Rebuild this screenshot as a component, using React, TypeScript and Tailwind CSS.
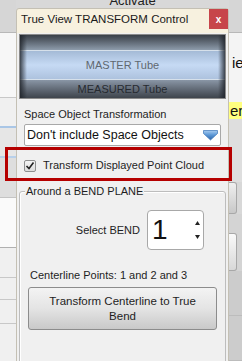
import React from 'react';

const font = { fontFamily: '"Liberation Sans", Arial, sans-serif' };

const DropArrow = () => (
  <svg width="15" height="12" viewBox="0 0 15 12">
    <defs>
      <linearGradient id="da" x1="0" y1="0" x2="0" y2="1">
        <stop offset="0" stopColor="#a8ccf0" />
        <stop offset="0.45" stopColor="#5f9ad8" />
        <stop offset="1" stopColor="#2a64a8" />
      </linearGradient>
    </defs>
    <path d="M0.5 1.5 L14.5 1.5 L14.5 4.5 L7.5 11 L0.5 4.5 Z" fill="url(#da)" stroke="#3a74b8" strokeWidth="0.7" />
  </svg>
);

const App = () => {
  return (
    <div className="relative w-[242px] h-[361px] overflow-hidden bg-[#ececec]" style={font}>
      {/* background app behind the dialog */}
      <div className="flex h-full">
        <div className="w-[16px] flex flex-col">
          <div className="h-[33px] bg-[#d6d6d6] border-b border-[#b8b8b8]" />
          <div className="h-[65px] bg-[#f7f7f7] border-b border-[#c8c8c8]" />
          <div className="h-[30px] bg-[#f0f0f0] border-b-2 border-[#a9c6e6]" />
          <div className="h-[30px] bg-[#e6e6e6] border-b-2 border-[#b8d0ea]" />
          <div className="h-[40px] bg-[#dedede] border-b border-[#c4c4c4]" />
          <div className="h-[50px] bg-[#fafafa] border-b border-[#b0b0b0]" />
          <div className="h-[30px] bg-[#f0f0f0] border-b border-[#c8c8c8]" />
          <div className="h-[22px] bg-[#f0f0f0] border-b border-[#c8c8c8]" />
          <div className="h-[24px] bg-[#f0f0f0] border-b border-[#c8c8c8]" />
          <div className="flex-1 bg-[#f0f0f0]" />
        </div>
        <div className="flex-1 bg-[#d8d8d8] flex justify-center">
          <span className="text-[13px] leading-none text-[#222] mt-[-6px] ml-[20px]">Activate</span>
        </div>
        <div className="w-[13px] flex flex-col">
          <div className="h-[33px] bg-[#d6d6d6] border-b border-[#b8b8b8]" />
          <div className="h-[70px] bg-[#f4f4f4] pt-[22px] text-[15px] leading-none text-[#111] pl-[3px] overflow-hidden whitespace-nowrap">ie</div>
          <div className="h-[17px] bg-[#ffff80] text-[15px] leading-[17px] text-[#111] pl-[1px] overflow-hidden whitespace-nowrap">er</div>
          <div className="h-[64px] bg-[#dedede]" />
          <div className="h-[32px] bg-[#d8d8d8] flex">
            <div className="w-[8px] rounded-r-[3px] border border-l-0 border-[#a8a8a8] bg-gradient-to-b from-[#f0f0f0] to-[#c8c8c8]" />
          </div>
          <div className="h-[20px] bg-[#d4d4d4]" />
          <div className="h-[38px] bg-[#d4d4d4] flex">
            <div className="w-[8px] rounded-r-[3px] border border-l-0 border-[#a8a8a8] bg-gradient-to-b from-[#fafafa] to-[#d8d8d8]" />
          </div>
          <div className="flex-1 bg-[#cccccc] flex flex-col">
            <div className="h-[45px] border-b border-[#bcbcbc]" />
            <div className="h-[45px] border-b border-[#bcbcbc]" />
          </div>
        </div>
      </div>

      {/* dialog window */}
      <div className="absolute left-[16px] top-[8px] w-[213px] h-[360px] bg-[#f7f1df] border border-[#c4c0b4] rounded-t-[3px] flex flex-col">
        <div className="h-[21px] flex items-center justify-between pl-[4px]">
          <span className="text-[11.5px] text-[#1a1a1a] whitespace-nowrap">True View TRANSFORM Control</span>
          <div className="w-[19px] h-[20px] bg-[#c7454a] flex items-center justify-center text-white text-[10px] font-bold mt-[-1px]">x</div>
        </div>
        <div className="flex-1 bg-[#f0f0f0] mt-[3px] px-[2px] pt-[1px] flex flex-col">
          {/* tube picture */}
          <div className="relative h-[65px] border border-[#8a8a8a] bg-gradient-to-b from-[#3e444c] via-[#b4c6dc] to-[#3c424a] overflow-hidden">
            <div className="h-[15px] bg-gradient-to-b from-[#3a4048] to-[#8e9cac]" />
            <div className="h-[30px] border-y border-[#d6e0ea] bg-gradient-to-b from-[#a4bad6] via-[#c6daf4] to-[#adc2de] flex items-center justify-center">
              <span className="text-[11px] text-[#606870]">MASTER Tube</span>
            </div>
            <div className="h-[18px] bg-gradient-to-b from-[#8a96a6] to-[#3e444c] flex items-center justify-center">
              <span className="text-[11px] text-[#262a30]">MEASURED Tube</span>
            </div>
            <div className="absolute left-0 top-0 bottom-0 w-[7px] bg-gradient-to-r from-[#1c2026] to-transparent opacity-80" />
            <div className="absolute right-0 top-0 bottom-0 w-[7px] bg-gradient-to-l from-[#1c2026] to-transparent opacity-80" />
          </div>

          <div className="px-[5px] pt-[8px] text-[11px] text-[#1e1e1e] leading-[14px]">Space Object Transformation</div>
          <div className="mx-[5px] mt-[3px] h-[22px] bg-white border border-[#a8a8a8] rounded-[2px] flex items-center justify-between pl-[2px] pr-[2px]">
            <span className="text-[12.5px] text-[#111] whitespace-nowrap">Don't include Space Objects</span>
            <DropArrow />
          </div>

          <div className="h-[33px] flex items-center gap-[7px] pl-[5px] pt-[6px]">
            <div className="w-[12px] h-[12px] border border-[#8e8f8f] rounded-[2px] bg-gradient-to-b from-[#f4f4f4] to-[#dcdcdc] flex items-center justify-center">
              <svg width="10" height="10" viewBox="0 0 10 10">
                <path d="M1.5 5 L4 7.5 L8.5 1.5" fill="none" stroke="#222" strokeWidth="1.6" />
              </svg>
            </div>
            <span className="text-[11px] text-[#1e1e1e] whitespace-nowrap">Transform Displayed Point Cloud</span>
          </div>

          {/* group box */}
          <div className="relative mt-[12px] flex-1 border border-[#bdbdbd] rounded-[3px] shadow-[inset_1px_1px_0_#fff] flex flex-col">
            <span className="absolute left-[5px] top-[-8px] bg-[#f0f0f0] px-[1px] text-[11px] text-[#1e1e1e] leading-[14px]">Around a BEND PLANE</span>
            <div className="flex items-center justify-end pr-[21px] pt-[18px] gap-[7px]">
              <span className="text-[11px] text-[#1e1e1e]">Select BEND</span>
              <div className="w-[57px] h-[40px] bg-white border border-[#a8a8a8] rounded-[4px] flex items-center justify-between pl-[4px] pr-[3px]">
                <span className="text-[28px] leading-none text-[#111]">1</span>
                <div className="flex flex-col gap-[10px]">
                  <svg width="5" height="4" viewBox="0 0 5 4"><path d="M0 4 L2.5 0 L5 4 Z" fill="#222" /></svg>
                  <svg width="5" height="4" viewBox="0 0 5 4"><path d="M0 0 L2.5 4 L5 0 Z" fill="#222" /></svg>
                </div>
              </div>
            </div>
            <div className="pl-[10px] pt-[18px] text-[11px] text-[#1e1e1e] leading-[14px]">Centerline Points: 1 and 2 and 3</div>
            <div className="mx-[8px] mt-[5px] h-[43px] border border-[#8c8c8c] rounded-[3px] bg-gradient-to-b from-[#f3f3f3] via-[#e4e4e4] to-[#c9c9c9] flex items-center justify-center text-center">
              <span className="text-[11.5px] leading-[15px] text-[#1e1e1e] px-[12px]">Transform Centerline to True Bend</span>
            </div>
          </div>
        </div>
      </div>

      {/* red highlight over the checkbox row */}
      <div className="absolute left-[5px] top-[147px] w-[227px] h-[34px] border-[3px] border-[#b50000]" />
    </div>
  );
};

export default App;
